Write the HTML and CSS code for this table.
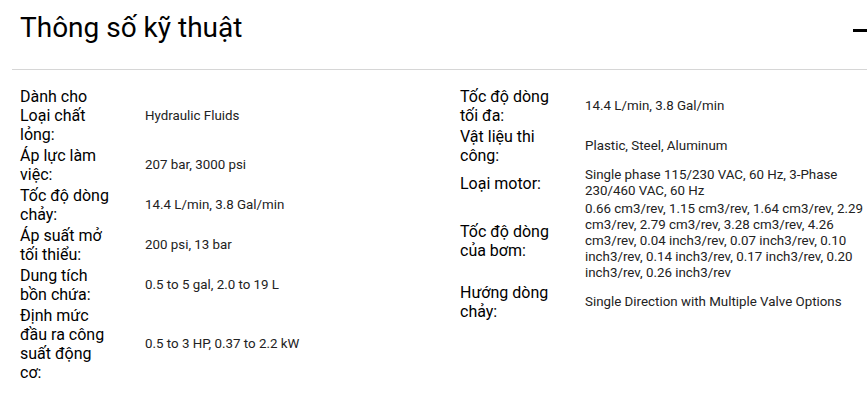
FILE: index.html
```html
<!DOCTYPE html>
<html lang="vi">
  <head>
    <meta charset="utf-8">
    <meta name="viewport" content="width=device-width, initial-scale=1">
    <title>Thông số kỹ thuật</title>
    <link rel="stylesheet" href="styles.css">
  </head>
  <body>
    <section class="specs">
      <div class="specs-header">
        <h2 class="specs-title">Thông số kỹ thuật</h2>
        <span class="specs-toggle"></span>
      </div>
      <div class="specs-body">
        <div class="specs-col">
          <div class="spec-label">Dành cho Loại chất lỏng:</div>
          <div class="spec-value">Hydraulic Fluids</div>
          <div class="spec-label">Áp lực làm việc:</div>
          <div class="spec-value">207 bar, 3000 psi</div>
          <div class="spec-label">Tốc độ dòng chảy:</div>
          <div class="spec-value">14.4 L/min, 3.8 Gal/min</div>
          <div class="spec-label">Áp suất mở tối thiểu:</div>
          <div class="spec-value">200 psi, 13 bar</div>
          <div class="spec-label">Dung tích bồn chứa:</div>
          <div class="spec-value">0.5 to 5 gal, 2.0 to 19 L</div>
          <div class="spec-label">Định mức đầu ra công suất động cơ:</div>
          <div class="spec-value">0.5 to 3 HP, 0.37 to 2.2 kW</div>
        </div>
        <div class="specs-col">
          <div class="spec-label">Tốc độ dòng tối đa:</div>
          <div class="spec-value">14.4 L/min, 3.8 Gal/min</div>
          <div class="spec-label">Vật liệu thi công:</div>
          <div class="spec-value">Plastic, Steel, Aluminum</div>
          <div class="spec-label">Loại motor:</div>
          <div class="spec-value">Single phase 115/230 VAC, 60 Hz, 3-Phase 230/460 VAC, 60 Hz</div>
          <div class="spec-label">Tốc độ dòng của bơm:</div>
          <div class="spec-value">0.66 cm3/rev, 1.15 cm3/rev, 1.64 cm3/rev, 2.29 cm3/rev, 2.79 cm3/rev, 3.28 cm3/rev, 4.26 cm3/rev, 0.04 inch3/rev, 0.07 inch3/rev, 0.10 inch3/rev, 0.14 inch3/rev, 0.17 inch3/rev, 0.20 inch3/rev, 0.26 inch3/rev</div>
          <div class="spec-label">Hướng dòng chảy:</div>
          <div class="spec-value">Single Direction with Multiple Valve Options</div>
        </div>
      </div>
    </section>
  </body>
</html>
```

FILE: styles.css
```css
html, body {
  margin: 0;
  overflow: hidden;
  background: #fff;
}
body {
  font-family: Roboto, "Liberation Sans", sans-serif;
  color: #111;
}
.specs {
  width: 869px;
}
.specs-header {
  display: flex;
  justify-content: space-between;
  align-items: center;
  margin-left: 12px;
  padding: 11px 0 25px 8px;
  border-bottom: 1px solid #d6d6d6;
}
.specs-title {
  margin: 0;
  font-size: 28px;
  font-weight: 400;
  line-height: 33px;
  color: #000;
}
.specs-toggle {
  flex: none;
  width: 16px;
  height: 3px;
  background: #000;
  margin-top: 6px;
}
.specs-body {
  display: grid;
  grid-template-columns: 440px 425px;
  padding: 17px 0 0 20px;
}
.specs-col {
  display: grid;
  grid-template-columns: 125px 285px;
  row-gap: 2px;
  align-content: start;
  align-items: center;
}
.spec-label {
  font-size: 16px;
  line-height: 19px;
  padding-right: 30px;
  color: #000;
}
.spec-value {
  font-size: 13.33px;
  line-height: 16px;
  color: #222;
}
```
